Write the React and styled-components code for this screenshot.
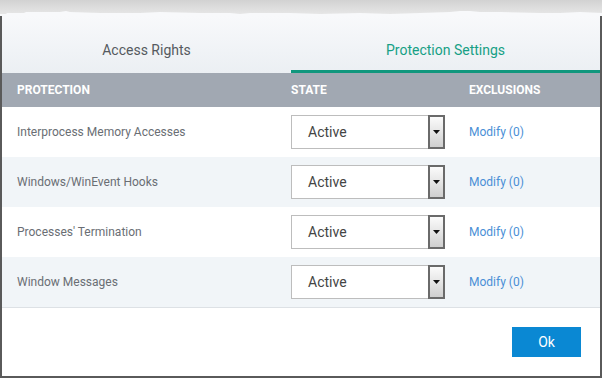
import styled, { createGlobalStyle } from "styled-components"

const GlobalStyle = createGlobalStyle`
    html, body {
        margin: 0;
        padding: 0;
        background: #ffffff;
    }
    body {
        font-family: Roboto, "Liberation Sans", Arial, sans-serif;
    }
`

const Pagina = styled.div`
    width: 602px;
    height: 378px;
    overflow: hidden;
    display: flex;
    flex-direction: column;
    background: #ffffff;
`

const BordaRasgada = styled.div`
    height: 16px;
    flex-shrink: 0;
    background: linear-gradient(#d2d2d2, #e9e9e9);
    svg {
        display: block;
    }
`

const Janela = styled.div`
    flex: 1;
    display: flex;
    flex-direction: column;
    border-left: 2px solid #5a5a5a;
    border-right: 2px solid #5a5a5a;
    border-bottom: 2px solid #5a5a5a;
`

const Abas = styled.div`
    display: flex;
    height: 57px;
    background: linear-gradient(#f8f9fb, #ebeff3);
`

const Aba = styled.div`
    width: ${props => props.$largura ? props.$largura : 'auto'};
    flex: ${props => props.$largura ? '0 0 auto' : '1'};
    display: flex;
    align-items: center;
    justify-content: center;
    padding-top: 13px;
    font-size: 14px;
    color: ${props => props.$ativa ? '#16a085' : '#555a60'};
    border-bottom: 3px solid ${props => props.$ativa ? '#10977d' : 'transparent'};
`

const Cabecalho = styled.div`
    display: grid;
    grid-template-columns: 274px 178px 1fr;
    align-items: center;
    height: 34px;
    padding-left: 15px;
    background: #a1a8b2;
    color: #ffffff;
    font-size: 12px;
    font-weight: bold;
    text-transform: uppercase;
`

const Linha = styled.div`
    display: grid;
    grid-template-columns: 274px 178px 1fr;
    align-items: center;
    height: 50px;
    padding-left: 15px;
    background: ${props => props.$par ? '#f1f5f8' : '#ffffff'};
    font-size: 12px;
    color: #6a6e74;
`

const Seletor = styled.div`
    display: flex;
    width: 154px;
    height: 34px;
    box-sizing: border-box;
    border: 1px solid #bdbdbd;
    background: #ffffff;
    span {
        flex: 1;
        display: flex;
        align-items: center;
        padding-left: 16px;
        font-size: 14px;
        color: #444444;
    }
`

const BotaoSeta = styled.div`
    width: 17px;
    box-sizing: border-box;
    border: 2px solid #6a6a6a;
    margin: -1px -1px -1px 0;
    background: linear-gradient(#fbfbfb, #cfcfcf);
    display: flex;
    align-items: center;
    justify-content: center;
`

const Link = styled.a`
    color: #4a8fd6;
    font-size: 12px;
    text-decoration: none;
`

const Rodape = styled.div`
    flex: 1;
    display: flex;
    justify-content: flex-end;
    align-items: flex-start;
    padding: 19px 19px 0 0;
    border-top: 1px solid #dde1e5;
`

const BotaoOk = styled.button`
    width: 69px;
    height: 30px;
    border: 0;
    background: #0a88d3;
    color: #ffffff;
    font-family: Roboto, "Liberation Sans", Arial, sans-serif;
    font-size: 14px;
    cursor: pointer;
`

const protecoes = [
    "Interprocess Memory Accesses",
    "Windows/WinEvent Hooks",
    "Processes' Termination",
    "Window Messages",
]

const Rasgo = () => (
    <svg width="602" height="16" viewBox="0 0 602 16">
        <path
            d="M0 16 L0 14 L6 14 L7 13 L24 13 L26 12 L60 12 L66 11 L70 12 L100 13 L140 13 L160 12 L200 13 L230 13 L240 14 L250 13 L290 13 L320 14 L360 13 L390 14 L420 13 L450 12 L460 11 L470 11 L480 12 L500 12 L540 13 L560 13 L580 12 L602 13 L602 16 Z"
            fill="#f8f9fb"
        />
    </svg>
)

const App = () => {
    return (<>
        <GlobalStyle />
        <Pagina>
            <BordaRasgada>
                <Rasgo />
            </BordaRasgada>
            <Janela>
                <Abas>
                    <Aba $largura="289px">Access Rights</Aba>
                    <Aba $ativa>Protection Settings</Aba>
                </Abas>
                <Cabecalho>
                    <div>Protection</div>
                    <div>State</div>
                    <div>Exclusions</div>
                </Cabecalho>
                {protecoes.map((nome, i) => (
                    <Linha key={nome} $par={i % 2 === 1}>
                        <div>{nome}</div>
                        <Seletor>
                            <span>Active</span>
                            <BotaoSeta>
                                <svg width="7" height="4" viewBox="0 0 7 4">
                                    <path d="M0 0 L7 0 L3.5 4 Z" fill="#111" />
                                </svg>
                            </BotaoSeta>
                        </Seletor>
                        <div><Link href="#">Modify (0)</Link></div>
                    </Linha>
                ))}
                <Rodape>
                    <BotaoOk>Ok</BotaoOk>
                </Rodape>
            </Janela>
        </Pagina>
    </>)
}

export default App
